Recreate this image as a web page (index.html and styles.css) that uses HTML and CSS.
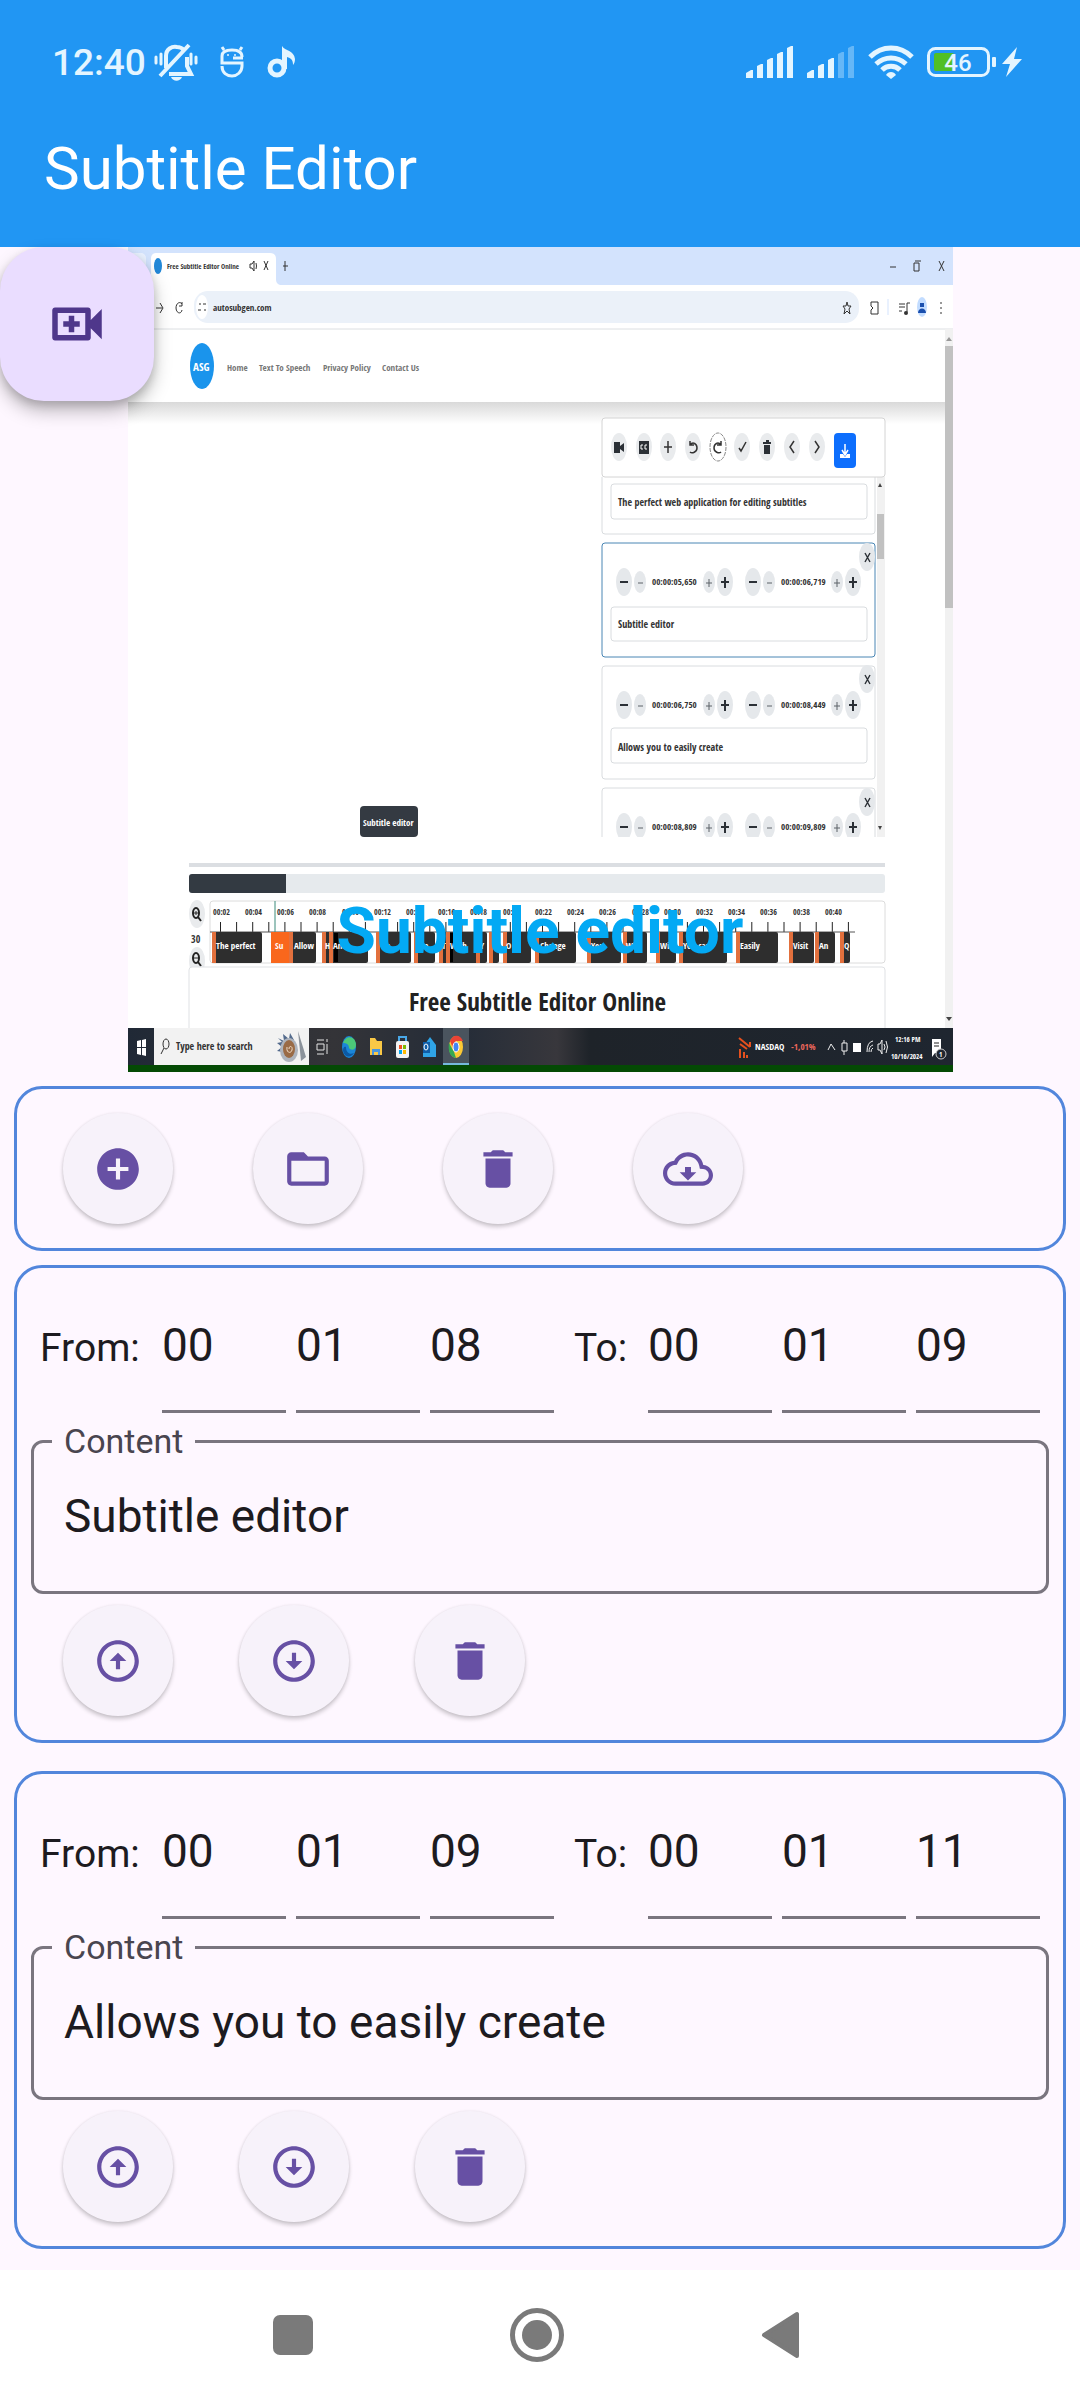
FILE: index.html
```html
<!DOCTYPE html>
<html lang="en">
<head>
  <meta charset="UTF-8">
  <meta name="viewport" content="width=device-width, initial-scale=1.0">
  <title>Subtitle Editor</title>
  <link rel="stylesheet" href="styles.css">
</head>
<body>
  <!-- shared icons -->
  <svg class="sprite" aria-hidden="true">
    <symbol id="icon-video" viewBox="0 0 24 24"><path d="M17 10.5V7c0-.55-.45-1-1-1H4c-.55 0-1 .45-1 1v10c0 .55.45 1 1 1h12c.55 0 1-.45 1-1v-3.5l4 4v-11l-4 4zM15 16H5V8h10v8zM9 9h2v2h2v2h-2v2H9v-2H7v-2h2z"/></symbol>
    <symbol id="icon-add" viewBox="0 0 24 24"><path d="M12 2C6.48 2 2 6.48 2 12s4.48 10 10 10 10-4.48 10-10S17.52 2 12 2zm5 11h-4v4h-2v-4H7v-2h4V7h2v4h4v2z"/></symbol>
    <symbol id="icon-folder" viewBox="0 0 24 24"><path d="M20 6h-8l-2-2H4c-1.1 0-2 .9-2 2v12c0 1.1.9 2 2 2h16c1.1 0 2-.9 2-2V8c0-1.1-.9-2-2-2zm0 12H4V8h16v10z"/></symbol>
    <symbol id="icon-delete" viewBox="0 0 24 24"><path d="M6 19c0 1.1.9 2 2 2h8c1.1 0 2-.9 2-2V7H6v12zM19 4h-3.5l-1-1h-5l-1 1H5v2h14V4z"/></symbol>
    <symbol id="icon-cloud" viewBox="0 0 24 24"><path d="M19.35 10.04C18.67 6.59 15.64 4 12 4 9.11 4 6.6 5.64 5.35 8.04 2.34 8.36 0 10.91 0 14c0 3.31 2.69 6 6 6h13c2.76 0 5-2.24 5-5 0-2.64-2.05-4.78-4.65-4.96zM19 18H6c-2.21 0-4-1.79-4-4 0-2.05 1.53-3.76 3.56-3.97l1.07-.11.5-.95C8.08 7.14 9.94 6 12 6c2.62 0 4.88 1.86 5.39 4.43l.3 1.5 1.53.11c1.56.1 2.78 1.41 2.78 2.96 0 1.65-1.35 3-3 3zm-5.55-7h-2.9v2.5H8l4 4 4-4h-2.55z"/></symbol>
    <symbol id="icon-up" viewBox="0 0 24 24"><path d="M12 20c-4.41 0-8-3.59-8-8s3.59-8 8-8 8 3.59 8 8-3.59 8-8 8m0 2c5.52 0 10-4.48 10-10S17.52 2 12 2 2 6.48 2 12s4.48 10 10 10zm-1-10v4h2v-4h3l-4-4-4 4h3z"/></symbol>
    <symbol id="icon-down" viewBox="0 0 24 24"><path d="M12 4c4.41 0 8 3.59 8 8s-3.59 8-8 8-8-3.59-8-8 3.59-8 8-8m0-2C6.48 2 2 6.48 2 12s4.48 10 10 10 10-4.48 10-10S17.52 2 12 2zm1 10V8h-2v4H8l4 4 4-4h-3z"/></symbol>
    <symbol id="cue-buttons" viewBox="0 0 280 40">
      <g fill="#e5e8eb">
        <ellipse cx="22" cy="20" rx="8" ry="14"/><ellipse cx="38" cy="20" rx="6" ry="11"/>
        <ellipse cx="107" cy="20" rx="6" ry="11"/><ellipse cx="123" cy="20" rx="8" ry="14"/>
        <ellipse cx="151" cy="20" rx="8" ry="14"/><ellipse cx="167" cy="20" rx="6" ry="11"/>
        <ellipse cx="235" cy="20" rx="6" ry="11"/><ellipse cx="251" cy="20" rx="8" ry="14"/>
      </g>
      <path d="M18 20h8M119 20h8M123 15v11M147 20h8M247 20h8M251 15v11" stroke="#2b3036" stroke-width="2"/>
      <path d="M36 21h5M104 21h6M107 17v8M165 21h5M232 21h6M235 17v8" stroke="#5c6268"/>
    </symbol>
    <symbol id="cue-close" viewBox="0 0 16 28">
      <ellipse cx="8" cy="14" rx="8" ry="14" fill="#e5e8eb"/>
      <path d="M6 10l5 9M11 10l-5 9" stroke="#2b3036" stroke-width="1.4"/>
    </symbol>
  </svg>

  <header class="app-header">
    <div class="status-bar">
      <div class="status-left">
        <span class="clock">12:40</span>
        <svg class="status-icon" viewBox="0 0 44 40" width="44" height="40" fill="none" stroke="#e4f5ff" stroke-width="4" aria-hidden="true">
          <path d="M12 26V14c0-7 6-10 11-9 3 0 5 1 7 3M33 15v9l4 8H15M6 34L35 3"/>
          <path d="M2 15v6M7 12v10M37 12v10M42 15v6" stroke-width="3" stroke-linecap="round"/>
          <path d="M17 35h11c-2 5-9 5-11 0z" fill="#e4f5ff" stroke="none"/>
        </svg>
        <svg class="status-icon" viewBox="0 0 24 32" width="24" height="32" fill="none" stroke="#e4f5ff" stroke-width="3" aria-hidden="true">
          <path d="M22 11c0-5-4-7-10-7S2 6 2 10v7h20v3c0 6-5 10-10 10S2 27 2 20M4 4L2 1M20 4l2-3M13 12h10"/>
          <circle cx="8" cy="9" r="1" fill="#e4f5ff" stroke="none"/><circle cx="15" cy="9" r="1" fill="#e4f5ff" stroke="none"/>
        </svg>
        <svg class="status-icon" viewBox="0 0 30 34" width="30" height="34" aria-hidden="true">
          <circle cx="11" cy="23" r="7" fill="none" stroke="#e4f5ff" stroke-width="5"/>
          <path d="M16 1c3 5 12 4 13 13 0 3-1 5-2 6 0-5-2-7-6-8v12h-5z" fill="#e4f5ff"/>
        </svg>
      </div>
      <div class="status-right">
        <svg viewBox="0 0 48 32" width="48" height="32" fill="#e4f5ff" aria-hidden="true">
          <path d="M0 27l5-3h2v8H0zM11 20l4-2h2v14h-6zM21 14l4-2h2v20h-6zM31 8l4-2h2v26h-6zM41 2l4-2h2v32h-6z"/>
        </svg>
        <svg viewBox="0 0 48 32" width="48" height="32" fill="#e4f5ff" aria-hidden="true">
          <path d="M0 27l5-3h2v8H0zM11 20l4-2h2v14h-6zM21 14l4-2h2v20h-6z"/>
          <path d="M31 8l4-2h2v26h-6zM41 2l4-2h2v32h-6z" opacity=".35"/>
        </svg>
        <svg class="wifi" viewBox="0 0 46 34" width="46" height="34" fill="none" stroke="#e4f5ff" stroke-width="5" aria-hidden="true">
          <path d="M2 12c12-12 30-12 42 0M8 19c9-8 21-8 30 0M14 25c5-5 13-5 18 0"/>
          <path d="M18 30c2-4 8-4 10 0l-5 4z" fill="#e4f5ff" stroke="none"/>
        </svg>
        <svg viewBox="0 0 70 30" width="70" height="30" role="img" aria-label="Battery 46 percent">
          <rect x="7" y="6" width="20" height="18" rx="2" fill="#51bf25"/>
          <rect x="1.5" y="1.5" width="60" height="27" rx="7" fill="none" stroke="#e4f5ff" stroke-width="3"/>
          <rect x="65" y="10" width="4" height="10" rx="1" fill="#e4f5ff"/>
          <text class="battery-text" x="31" y="24">46</text>
        </svg>
        <svg viewBox="0 0 20 30" width="20" height="30" fill="#e4f5ff" aria-hidden="true"><path d="M15 0L0 17h8L4 30l16-18h-8z"/></svg>
      </div>
    </div>
    <h1>Subtitle Editor</h1>
  </header>

  <main>
    <section class="player">
      <svg class="frame" viewBox="0 0 825 825" role="img" aria-label="Video preview">
        <defs>
          <linearGradient id="shade" x1="0" y1="0" x2="0" y2="1">
            <stop offset="0" stop-color="#d9d9d9"/><stop offset="1" stop-color="#fff"/>
          </linearGradient>
          <linearGradient id="taskbar" x1="0" y1="0" x2="1" y2="0">
            <stop offset="0" stop-color="#202936"/><stop offset=".25" stop-color="#343438"/><stop offset=".4" stop-color="#242c38"/>
            <stop offset=".52" stop-color="#38373c"/><stop offset=".56" stop-color="#1e2329"/><stop offset="1" stop-color="#1f2630"/>
          </linearGradient>
          <clipPath id="list-clip"><rect x="470" y="230" width="290" height="360"/></clipPath>
          <clipPath id="zoom-clip"><rect x="55" y="650" width="30" height="70"/></clipPath>
        </defs>
        <rect width="825" height="825" fill="#fff"/>

        <!-- browser tabs and address bar -->
        <rect width="825" height="38" fill="#d3e3fd"/>
        <rect y="6" width="18" height="32" rx="5" fill="#e9f1fe"/>
        <path d="M18 38c4 0 5-2 5-5V12c0-4 2-6 5-6h114c4 0 6 2 6 6v20c0 4 2 6 6 6z" fill="#fff"/>
        <ellipse cx="30" cy="19" rx="4" ry="8" fill="#2288d8"/>
        <text class="tiny" x="39" y="22">Free Subtitle Editor Online</text>
        <path d="M122 17h2l2-3v10l-2-3h-2zM128 16q1 3 0 6M136 14l4 9M140 14l-4 9M155 19h5M157 14v10M762 20h6M811 14l5 10M816 14l-5 10M786 16h5v8h-5zM787 14h6" class="line"/>
        <path d="M28 61h6M32 56l3 5-3 5M54 57c-2-3-6-1-6 4s5 7 6 2M54 55v4h-3" class="line"/>
        <rect x="66" y="44" width="665" height="32" rx="14" fill="#ebf1f9"/>
        <ellipse cx="74" cy="60" rx="6" ry="12" fill="#fff"/>
        <path d="M71 57h2M75 57h3M70 63h3M76 63h2" class="line"/>
        <text class="medium" x="85" y="64">autosubgen.com</text>
        <path d="M719 55l1 4h3l-2 3 1 5-3-3-3 3 1-5-2-3h3zM743 55h7v12h-7v-4l2-2-2-2zM771 57h6M771 60h6M771 64h3M779 65v-9h3M813 55v2M813 60v2M813 65v2" class="line"/>
        <circle cx="778" cy="66" r="2" fill="#333"/>
        <path d="M760 52v16" stroke="#d3e3fd"/>
        <ellipse cx="794" cy="60" rx="5" ry="10" fill="#c2dcff"/>
        <path d="M790 66c0-6 8-6 8 0zM792 56h4v4h-4z" fill="#1a4fae"/>
        <path d="M0 82h825" stroke="#dcdfe2"/>

        <!-- site header -->
        <rect y="155" width="817" height="22" fill="url(#shade)"/>
        <ellipse cx="74" cy="119" rx="12" ry="23" fill="#1a94ec"/>
        <text class="logo" x="65" y="124">ASG</text>
        <text class="nav" x="99" y="124">Home</text>
        <text class="nav" x="131" y="124">Text To Speech</text>
        <text class="nav" x="195" y="124">Privacy Policy</text>
        <text class="nav" x="254" y="124">Contact Us</text>
        <rect x="817" y="82" width="8" height="699" fill="#f1f1f1"/>
        <rect x="817" y="99" width="8" height="262" fill="#c1c1c1"/>
        <path d="M818 94l3-4 3 4z" fill="#999"/>
        <path d="M818 770l3 4 3-4z" fill="#444"/>

        <!-- cue list -->
        <g clip-path="url(#list-clip)">
          <rect x="749" y="230" width="8" height="360" fill="#f1f1f1"/>
          <rect x="749" y="267" width="7" height="45" fill="#c1c1c1"/>
          <path d="M750 240l2-4 2 4zM750 579l2 4 2-4z" fill="#444"/>
          <g fill="#fff" stroke="#d9dcdf">
            <rect x="474" y="215" width="273" height="72" rx="3"/>
            <rect x="474" y="296" width="273" height="114" rx="3" stroke="#4a86b4"/>
            <rect x="474" y="419" width="273" height="113" rx="3"/>
            <rect x="474" y="541" width="273" height="113" rx="3"/>
            <rect x="483" y="237" width="256" height="35" rx="3"/>
            <rect x="483" y="360" width="256" height="34" rx="3"/>
            <rect x="483" y="481" width="256" height="35" rx="3"/>
          </g>
          <use href="#cue-close" x="731" y="296" width="16" height="28"/>
          <use href="#cue-close" x="731" y="418" width="16" height="28"/>
          <use href="#cue-close" x="731" y="541" width="16" height="28"/>
          <use href="#cue-buttons" x="474" y="315" width="280" height="40"/>
          <use href="#cue-buttons" x="474" y="438" width="280" height="40"/>
          <use href="#cue-buttons" x="474" y="560" width="280" height="40"/>
          <text class="medium" x="524" y="338">00:00:05,650</text>
          <text class="medium" x="653" y="338">00:00:06,719</text>
          <text class="medium" x="524" y="461">00:00:06,750</text>
          <text class="medium" x="653" y="461">00:00:08,449</text>
          <text class="medium" x="524" y="583">00:00:08,809</text>
          <text class="medium" x="653" y="583">00:00:09,809</text>
          <text class="small" x="490" y="259">The perfect web application for editing subtitles</text>
          <text class="small" x="490" y="381">Subtitle editor</text>
          <text class="small" x="490" y="504">Allows you to easily create</text>
        </g>
        <rect x="474" y="171" width="283" height="59" rx="3" fill="#fff" stroke="#d4d4d4"/>
        <g fill="#e9ebed">
          <ellipse cx="491" cy="200" rx="8" ry="14"/><ellipse cx="516" cy="200" rx="8" ry="14"/>
          <ellipse cx="540" cy="200" rx="8" ry="14"/><ellipse cx="565" cy="200" rx="8" ry="14"/>
          <ellipse cx="590" cy="200" rx="8" ry="14" fill="#fff" stroke="#888" stroke-dasharray="4 1"/><ellipse cx="614" cy="200" rx="8" ry="14"/>
          <ellipse cx="639" cy="200" rx="8" ry="14"/><ellipse cx="664" cy="200" rx="8" ry="14"/>
          <ellipse cx="689" cy="200" rx="8" ry="14"/>
        </g>
        <path d="M486 195h6v4l4-3v9l-4-3v4h-6zM511 194h10v13h-10zM635 195h8v2h-8zM636 198h6v9h-6zM638 193h3v2h-3z" fill="#2b3036"/>
        <path d="M515 198h-2v4h2M519 198h-2v4h2" fill="none" stroke="#fff"/>
        <path d="M536 200h8M540 194v12M562 194v4h4M562 198c3-4 7-1 7 3s-5 6-7 4M593 194v4h-4M593 198c-3-4-7-1-7 3s5 6 7 4M611 201l2 3 5-9M666 194l-4 6 4 6M687 194l4 6-4 6" class="line bold"/>
        <rect x="706" y="186" width="22" height="35" rx="4" fill="#0d6efd"/>
        <path d="M717 197v10M714 203l3 5 3-5" fill="none" stroke="#fff" stroke-width="1.5"/>
        <path d="M712 207h3l2 3 2-3h3v4h-10z" fill="#fff"/>

        <!-- caption chip, progress and timeline -->
        <rect x="232" y="559" width="58" height="31" rx="4" fill="#343a42"/>
        <text class="medium light" x="235" y="579">Subtitle editor</text>
        <rect x="61" y="616" width="696" height="4" fill="#dbdee2"/>
        <rect x="61" y="627" width="696" height="19" rx="3" fill="#e6eaed"/>
        <path d="M64 627h94v19H64q-3 0-3-3v-13q0-3 3-3z" fill="#333a42"/>
        <g clip-path="url(#zoom-clip)">
          <ellipse cx="69" cy="667" rx="8" ry="14" fill="#e9ebed"/>
          <ellipse cx="69" cy="714" rx="8" ry="14" fill="#e9ebed"/>
          <ellipse cx="68" cy="666" rx="3" ry="5" fill="none" stroke="#222" stroke-width="2"/>
          <ellipse cx="68" cy="711" rx="3" ry="5" fill="none" stroke="#222" stroke-width="2"/>
          <path d="M70 670l3 4M70 715l3 4" stroke="#222" stroke-width="2"/>
          <path d="M66 666h4M68 664v4M66 711h4" stroke="#222"/>
        </g>
        <text class="small" x="63" y="696">30</text>
        <rect x="82" y="654" width="675" height="62" rx="3" fill="#fff" stroke="#dcdcdc"/>
        <g class="time">
          <text x="85" y="668">00:02</text><text x="117" y="668">00:04</text><text x="149" y="668">00:06</text><text x="181" y="668">00:08</text>
          <text x="214" y="668">00:10</text><text x="246" y="668">00:12</text><text x="278" y="668">00:14</text><text x="310" y="668">00:16</text>
          <text x="342" y="668">00:18</text><text x="375" y="668">00:20</text><text x="407" y="668">00:22</text><text x="439" y="668">00:24</text>
          <text x="471" y="668">00:26</text><text x="504" y="668">00:28</text><text x="536" y="668">00:30</text><text x="568" y="668">00:32</text>
          <text x="600" y="668">00:34</text><text x="632" y="668">00:36</text><text x="665" y="668">00:38</text><text x="697" y="668">00:40</text>
        </g>
        <path d="M92 680h630" stroke="#222" stroke-width="10" stroke-dasharray="1 15.1"/>
        <path d="M82 685h645" stroke="#555"/>
        <path d="M147 654v31" stroke="#3a8a7a"/>
        <g fill="#2e2e2e">
          <rect x="84" y="685" width="50" height="31" rx="2"/><rect x="143" y="685" width="20" height="31" fill="#f9671c"/>
          <rect x="161" y="685" width="27" height="31" rx="2"/><rect x="194" y="685" width="46" height="31" rx="2"/>
          <rect x="248" y="685" width="35" height="31" rx="2"/><rect x="286" y="685" width="21" height="31" rx="2"/>
          <rect x="311" y="685" width="48" height="31" rx="2"/><rect x="361" y="685" width="10" height="31" rx="2"/>
          <rect x="375" y="685" width="28" height="31" rx="2"/><rect x="407" y="685" width="41" height="31" rx="2"/>
          <rect x="459" y="685" width="34" height="31" rx="2"/><rect x="495" y="685" width="24" height="31" rx="2"/>
          <rect x="528" y="685" width="20" height="31" rx="2"/><rect x="551" y="685" width="48" height="31" rx="2"/>
          <rect x="608" y="685" width="42" height="31" rx="2"/><rect x="661" y="685" width="25" height="31" rx="2"/>
          <rect x="687" y="685" width="20" height="31" rx="2"/><rect x="712" y="685" width="10" height="31" rx="2"/>
        </g>
        <path d="M208 686v29M323 686v29" stroke="#000" stroke-width="4"/>
        <path d="M86 685v31M163 685v31M196 685v31M203 685v31M250 685v31M288 685v31M313 685v31M320 685v31M350 685v31M363 685v31M377 685v31M409 685v31M461 685v31M497 685v31M530 685v31M553 685v31M610 685v31M663 685v31M689 685v31M714 685v31" stroke="#e2703d" stroke-width="4"/>
        <g class="cue">
          <text x="88" y="702">The perfect</text><text x="147" y="702">Su</text><text x="166" y="702">Allow</text><text x="197" y="702">H</text>
          <text x="205" y="702">And</text><text x="255" y="702">In</text><text x="290" y="702">ive</text><text x="314" y="702">T</text>
          <text x="322" y="702">With</text><text x="352" y="702">Y</text><text x="378" y="702">O</text><text x="412" y="702">Change</text>
          <text x="463" y="702">You</text><text x="498" y="702">Wi</text><text x="532" y="702">Wit</text><text x="555" y="702">You can</text>
          <text x="612" y="702">Easily</text><text x="665" y="702">Visit</text><text x="691" y="702">An</text><text x="716" y="702">Q</text>
        </g>
        <path d="M61 781v-58q0-3 3-3h690q3 0 3 3v58" fill="none" stroke="#dfe1e4"/>
        <text class="heading" x="281" y="764">Free Subtitle Editor Online</text>

        <!-- desktop taskbar -->
        <rect y="781" width="825" height="37" fill="url(#taskbar)"/>
        <rect y="818" width="825" height="7" fill="#044a04"/>
        <path d="M9 794l4-1v7H9zM14 793l4-1v8h-4zM9 801h4v7l-4-1zM14 801h4v8l-4-1z" fill="#fff"/>
        <rect x="26" y="781" width="155" height="37" fill="#f2f2f2"/>
        <ellipse cx="38" cy="797" rx="3" ry="5" fill="none" stroke="#333"/><path d="M36 801l-3 6" stroke="#333"/>
        <text class="small" x="48" y="803">Type here to search</text>
        <path d="M150 791l6 3-1-7 6 5 1-6 4 7c-6 2-8 9-4 16l-8 1 1-5-6-1 5-4-5-4 5-1z" fill="#536a8c"/>
        <ellipse cx="161" cy="803" rx="9" ry="12" fill="#aeb4bd"/>
        <ellipse cx="161" cy="802" rx="6" ry="9" fill="#9a6b46"/><path d="M161 802c0-4 4-3 3 1s-6 3-5-3" fill="none" stroke="#f0ddc8"/>
        <path d="M170 784l8 26-5 4z" fill="#8b929b"/>
        <path d="M189 793h7M189 797h7v6h-7v-6M189 807h7M199 792v3M199 797v10" fill="none" stroke="#e5e5e5"/>
        <ellipse cx="221" cy="800" rx="7" ry="11" fill="#1b86d8"/><path d="M215 796c3-9 13-7 13 2 0 5-5 6-7 3 0-4-3-5-6-5z" fill="#4cc878"/><path d="M218 800c0 6 4 8 8 6-3 5-9 5-11-2 0-3 1-5 3-4z" fill="#0c59a4"/>
        <path d="M242 791h5l2 3h5v14h-12z" fill="#f9c846"/><path d="M244 808v-6h8v6h-2v-3h-4v3z" fill="#4a96dc"/>
        <rect x="268" y="794" width="13" height="17" rx="2" fill="#f3f3f3"/><path d="M271 794v-4h7v4" fill="none" stroke="#49a8e8" stroke-width="2"/>
        <path d="M271 798h3v4h-3z" fill="#f25022"/><path d="M275 798h3v4h-3z" fill="#7fba00"/><path d="M271 803h3v4h-3z" fill="#00a4ef"/><path d="M275 803h3v4h-3z" fill="#ffb900"/>
        <path d="M295 800l7-10 6 8v12h-13z" fill="#2fa4e7"/><rect x="295" y="795" width="7" height="11" fill="#0f5ea8"/><ellipse cx="298" cy="800" rx="2" ry="3" fill="none" stroke="#fff"/>
        <rect x="315" y="781" width="26" height="37" fill="#4a545e"/><rect x="315" y="816" width="26" height="2" fill="#76b9dd"/>
        <ellipse cx="328" cy="800" rx="7" ry="11" fill="#fcc934"/><path d="M322 794c3-7 10-7 13 0h-7l-3 7z" fill="#ea4335"/><path d="M321 796l5 9 2 6c-7-1-8-9-7-15z" fill="#34a853"/><ellipse cx="328" cy="800" rx="3" ry="5" fill="#4285f4" stroke="#fff"/>
        <path d="M612 811v-9M616 811v-6M619 811v-3M611 791l11 9M622 800v-5M612 797l7 5" stroke="#e4501e" stroke-width="2" fill="none"/>
        <text class="medium light" x="627" y="803">NASDAQ</text>
        <text class="medium down" x="663" y="803">-1,01%</text>
        <path d="M700 803l3-6 4 6M714 796h5v8h-5zM716 793v3M716 804v4M739 805q0-10 6-11M741 805q0-6 4-7M743 805q0-3 2-4M750 797h2l2-4v14l-2-4h-2zM756 797q2 3 0 6M758 794q3 6 0 12" fill="none" stroke="#eee"/>
        <path d="M725 796h8v9h-8zM804 792h9v14h-6l-3 4z" fill="#fff"/>
        <path d="M806 796h5M806 799h5" stroke="#222"/>
        <circle cx="813" cy="807" r="5" fill="#1f2630" stroke="#ccc"/><text class="tiny light" x="811" y="810">1</text>
        <text class="tiny light" x="767" y="795">12:16 PM</text>
        <text class="tiny light" x="763" y="812">10/16/2024</text>
      </svg>
      <p class="caption">Subtitle editor</p>
      <button type="button" class="fab" aria-label="Add video"><svg class="fab-icon"><use href="#icon-video"/></svg></button>
    </section>

    <section class="panel toolbar">
      <button type="button" class="round" aria-label="Add subtitle"><svg class="icon"><use href="#icon-add"/></svg></button>
      <button type="button" class="round" aria-label="Open file"><svg class="icon"><use href="#icon-folder"/></svg></button>
      <button type="button" class="round" aria-label="Delete all"><svg class="icon"><use href="#icon-delete"/></svg></button>
      <button type="button" class="round" aria-label="Download"><svg class="icon"><use href="#icon-cloud"/></svg></button>
    </section>

    <section class="panel subtitle">
      <div class="times">
        <label for="from-h-1">From:</label>
        <input id="from-h-1" type="text" inputmode="numeric" value="00">
        <input type="text" inputmode="numeric" value="01" aria-label="From minutes">
        <input type="text" inputmode="numeric" value="08" aria-label="From seconds">
        <label class="to" for="to-h-1">To:</label>
        <input id="to-h-1" type="text" inputmode="numeric" value="00">
        <input type="text" inputmode="numeric" value="01" aria-label="To minutes">
        <input type="text" inputmode="numeric" value="09" aria-label="To seconds">
      </div>
      <fieldset class="content">
        <legend><label for="content-1">Content</label></legend>
        <input id="content-1" type="text" value="Subtitle editor">
      </fieldset>
      <div class="actions">
        <button type="button" class="round" aria-label="Insert above"><svg class="icon"><use href="#icon-up"/></svg></button>
        <button type="button" class="round" aria-label="Insert below"><svg class="icon"><use href="#icon-down"/></svg></button>
        <button type="button" class="round" aria-label="Delete"><svg class="icon"><use href="#icon-delete"/></svg></button>
      </div>
    </section>

    <section class="panel subtitle">
      <div class="times">
        <label for="from-h-2">From:</label>
        <input id="from-h-2" type="text" inputmode="numeric" value="00">
        <input type="text" inputmode="numeric" value="01" aria-label="From minutes">
        <input type="text" inputmode="numeric" value="09" aria-label="From seconds">
        <label class="to" for="to-h-2">To:</label>
        <input id="to-h-2" type="text" inputmode="numeric" value="00">
        <input type="text" inputmode="numeric" value="01" aria-label="To minutes">
        <input type="text" inputmode="numeric" value="11" aria-label="To seconds">
      </div>
      <fieldset class="content">
        <legend><label for="content-2">Content</label></legend>
        <input id="content-2" type="text" value="Allows you to easily create">
      </fieldset>
      <div class="actions">
        <button type="button" class="round" aria-label="Insert above"><svg class="icon"><use href="#icon-up"/></svg></button>
        <button type="button" class="round" aria-label="Insert below"><svg class="icon"><use href="#icon-down"/></svg></button>
        <button type="button" class="round" aria-label="Delete"><svg class="icon"><use href="#icon-delete"/></svg></button>
      </div>
    </section>
  </main>

  <nav class="system-nav">
    <button type="button" aria-label="Recent apps"><svg viewBox="0 0 54 54"><rect x="7" y="7" width="40" height="40" rx="7"/></svg></button>
    <button type="button" aria-label="Home"><svg viewBox="0 0 54 54"><circle cx="27" cy="27" r="24.5" fill="none" stroke="#7a7a7a" stroke-width="5"/><circle cx="27" cy="27" r="15"/></svg></button>
    <button type="button" aria-label="Back"><svg viewBox="0 0 54 54"><path d="M10 27L43 6v42z" stroke="#7a7a7a" stroke-width="4" stroke-linejoin="round"/></svg></button>
  </nav>
</body>
</html>
```
FILE: styles.css
```css
* {
  box-sizing: border-box;
}

body {
  margin: 0;
  min-height: 100vh;
  display: flex;
  flex-direction: column;
  background-color: #fef7ff;
  color: #1d1b20;
  font-family: Roboto, sans-serif;
}

button {
  padding: 0;
  border: none;
  background: none;
  cursor: pointer;
}

.sprite {
  display: none;
}

.app-header {
  background-color: #2196f3;
  color: white;
  padding: 42px 44px 43px;
}

.status-bar,
.status-left,
.status-right {
  display: flex;
  align-items: center;
}

.status-bar {
  justify-content: space-between;
  height: 40px;
  padding: 0 14px 0 8px;
  color: #e4f5ff;
}

.clock {
  font-size: 37px;
  font-weight: 500;
  margin-right: 8px;
}

.status-icon + .status-icon {
  margin-left: 22px;
}

.status-right {
  gap: 13px;
}

.status-right svg:last-child {
  margin-left: -8px;
}

.battery-text {
  font: 500 24px Roboto, sans-serif;
  text-anchor: middle;
  fill: #e4f5ff;
}

h1 {
  margin: 51px 0 0;
  font-size: 60px;
  font-weight: 400;
  line-height: 71px;
}

/* Video */

.player {
  position: relative;
  display: flex;
  justify-content: center;
}

.frame {
  display: block;
  width: 100%;
  max-width: 825px;
}

.frame text {
  font-family: "Liberation Sans Narrow", "Open Sans Condensed", "Noto Sans", sans-serif;
  fill: #333;
}

.frame .tiny {
  font-size: 7px;
}

.frame .small {
  font-size: 10px;
}

.frame .medium,
.frame .nav,
.frame .cue text {
  font-size: 9px;
}

.frame .time text {
  font-size: 8px;
}

.frame .nav {
  fill: #777;
}

.frame .logo {
  font-size: 11px;
  font-weight: 700;
  fill: white;
}

.frame .heading {
  font-size: 25px;
  fill: #222;
}

.frame .light,
.frame .cue text {
  fill: white;
}

.frame .down {
  fill: #f0685c;
}

.frame .line {
  fill: none;
  stroke: #333;
}

.frame .bold {
  stroke-width: 1.5;
}

.caption {
  position: absolute;
  left: 0;
  right: 0;
  bottom: 108px;
  margin: 0;
  color: #03a9f4;
  font-size: 64px;
  font-weight: 700;
  line-height: 64px;
  text-align: center;
}

.fab {
  position: absolute;
  top: 0;
  left: 0;
  display: grid;
  place-items: center;
  width: 154px;
  height: 154px;
  border-radius: 44px;
  background-color: #eaddff;
  box-shadow: 0 10px 18px rgba(0, 0, 0, 0.26), 0 4px 8px rgba(0, 0, 0, 0.14);
}

.fab-icon {
  width: 66px;
  height: 66px;
  fill: #4f378b;
}

/* Panels */

.panel {
  margin: 14px;
  border: 3px solid #5286dc;
  border-radius: 28px;
}

.toolbar {
  display: flex;
  gap: 80px;
  padding: 24px 46px;
}

.round {
  display: grid;
  place-items: center;
  width: 110px;
  height: 111px;
  border-radius: 50%;
  background-color: #f7f2fa;
  box-shadow: 0 3px 4px rgba(0, 0, 0, 0.2), 0 0 3px rgba(0, 0, 0, 0.08);
}

.icon {
  width: 50px;
  height: 50px;
  fill: #6750a4;
}

.subtitle {
  margin-bottom: 28px;
  padding: 11px 14px 24px;
}

.subtitle:last-child {
  margin-bottom: 20px;
}

.times {
  display: grid;
  grid-template-columns: 112px repeat(3, 1fr) 74px repeat(3, 1fr);
  column-gap: 10px;
  align-items: baseline;
  padding: 0 9px;
  font-size: 39px;
}

.times .to {
  padding-left: 10px;
}

.times input {
  width: 100%;
  min-width: 0;
  height: 134px;
  padding: 0;
  border: none;
  border-bottom: 3px solid #7a757f;
}

.times input,
.content input {
  background: none;
  color: #1d1b20;
  font-family: inherit;
  font-size: 46px;
}

.content {
  min-width: 0;
  margin: 8px 0 0;
  padding: 0 30px;
  border: 3px solid #7a757f;
  border-radius: 12px;
}

.content legend {
  margin-left: -12px;
  padding: 0 12px;
  color: #49454f;
  font-size: 34px;
  line-height: 40px;
}

.content input {
  display: block;
  width: 100%;
  height: 130px;
  padding: 0 0 20px;
  border: none;
}

.actions {
  display: flex;
  gap: 66px;
  margin-top: 11px;
  padding: 0 32px;
}

/* Android navigation */

.system-nav {
  display: flex;
  justify-content: center;
  align-items: center;
  gap: 190px;
  height: 130px;
  margin-top: auto;
  padding-right: 7px;
  background-color: white;
}

.system-nav svg {
  display: block;
  width: 54px;
  height: 54px;
  fill: #7a7a7a;
}
```
